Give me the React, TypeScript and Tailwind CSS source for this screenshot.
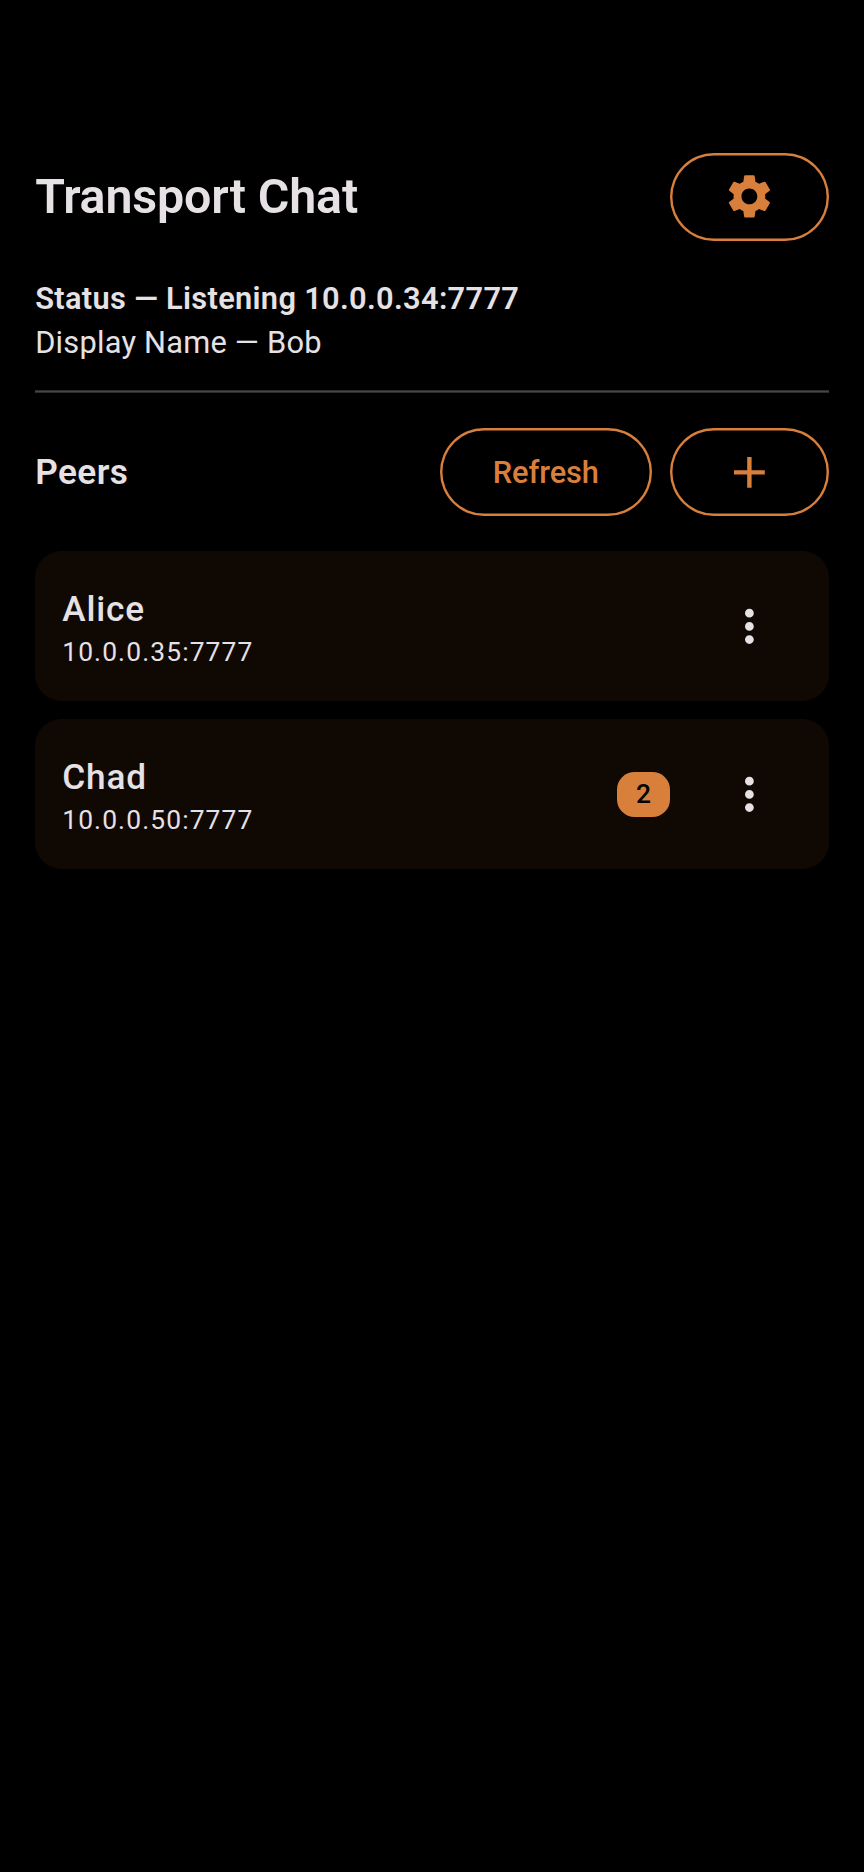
import type { ReactNode } from "react";
import { MdAdd, MdMoreVert, MdSettings } from "react-icons/md";

type Peer = { name: string; address: string; unread: number };

const peers: Peer[] = [
  { name: "Alice", address: "10.0.0.35:7777", unread: 0 },
  { name: "Chad", address: "10.0.0.50:7777", unread: 2 },
];

function PillButton({ children, label }: { children: ReactNode; label: string }) {
  return (
    <button
      aria-label={label}
      className="flex h-[88px] min-w-[158.4px] shrink-0 items-center justify-center rounded-full px-[53.2px] text-[30.8px] leading-[44px] font-medium tracking-[-0.1px] text-[#d97f3c] shadow-[inset_0_0_0_2.4px_#d97f3c]"
    >
      {children}
    </button>
  );
}

function PeerCard({ peer }: { peer: Peer }) {
  return (
    <li className="flex h-[150.4px] items-center rounded-[26.4px] bg-[#100803] pr-[53px] pl-[27px]">
      <div className="flex-1 pt-px">
        <div className="text-[35.2px] leading-[52.8px] font-medium tracking-[0.88px]">{peer.name}</div>
        <div className="text-[26.4px] leading-[35.2px] tracking-[1.12px]">{peer.address}</div>
      </div>
      {peer.unread > 0 && (
        <span className="mr-[53px] flex h-[45px] w-[53px] items-center justify-center rounded-[17.6px] bg-[#d97f3c] pt-px text-[26.4px] leading-[35.2px] font-medium text-black">
          {peer.unread}
        </span>
      )}
      <button aria-label="More options">
        <MdMoreVert className="size-[52.8px]" />
      </button>
    </li>
  );
}

export default function App() {
  return (
    <main className="min-h-[1872px] bg-black px-[35.2px] pt-[153px] font-['Roboto',sans-serif] text-[#e6e1e5]">
      <header className="flex h-[88px] items-center justify-between">
        <h1 className="text-[48.4px] leading-[61.6px] font-semibold tracking-[-0.15px]">Transport Chat</h1>
        <PillButton label="Settings">
          <MdSettings className="mb-px size-[52.8px]" />
        </PillButton>
      </header>

      <section className="mt-[36px] text-[30.8px] leading-[44px]">
        <p className="font-semibold tracking-[0.32px]">Status — Listening 10.0.0.34:7777</p>
        <p className="tracking-[0.22px]">Display Name — Bob</p>
      </section>

      <hr className="mt-[25px] h-[3px] border-0 border-y border-[#2d2d30] bg-[#46464b]" />

      <section className="mt-[35px]">
        <div className="flex h-[88px] items-center gap-[17.6px]">
          <h2 className="flex-1 pt-px text-[35.2px] leading-[52.8px] font-semibold tracking-[0.44px]">Peers</h2>
          <PillButton label="Refresh">
            <span className="pt-[2px]">Refresh</span>
          </PillButton>
          <PillButton label="Add peer">
            <MdAdd className="size-[52.8px]" />
          </PillButton>
        </div>
        <ul className="mt-[35px] flex flex-col gap-[17.6px]">
          {peers.map((peer) => (
            <PeerCard key={peer.name} peer={peer} />
          ))}
        </ul>
      </section>
    </main>
  );
}
